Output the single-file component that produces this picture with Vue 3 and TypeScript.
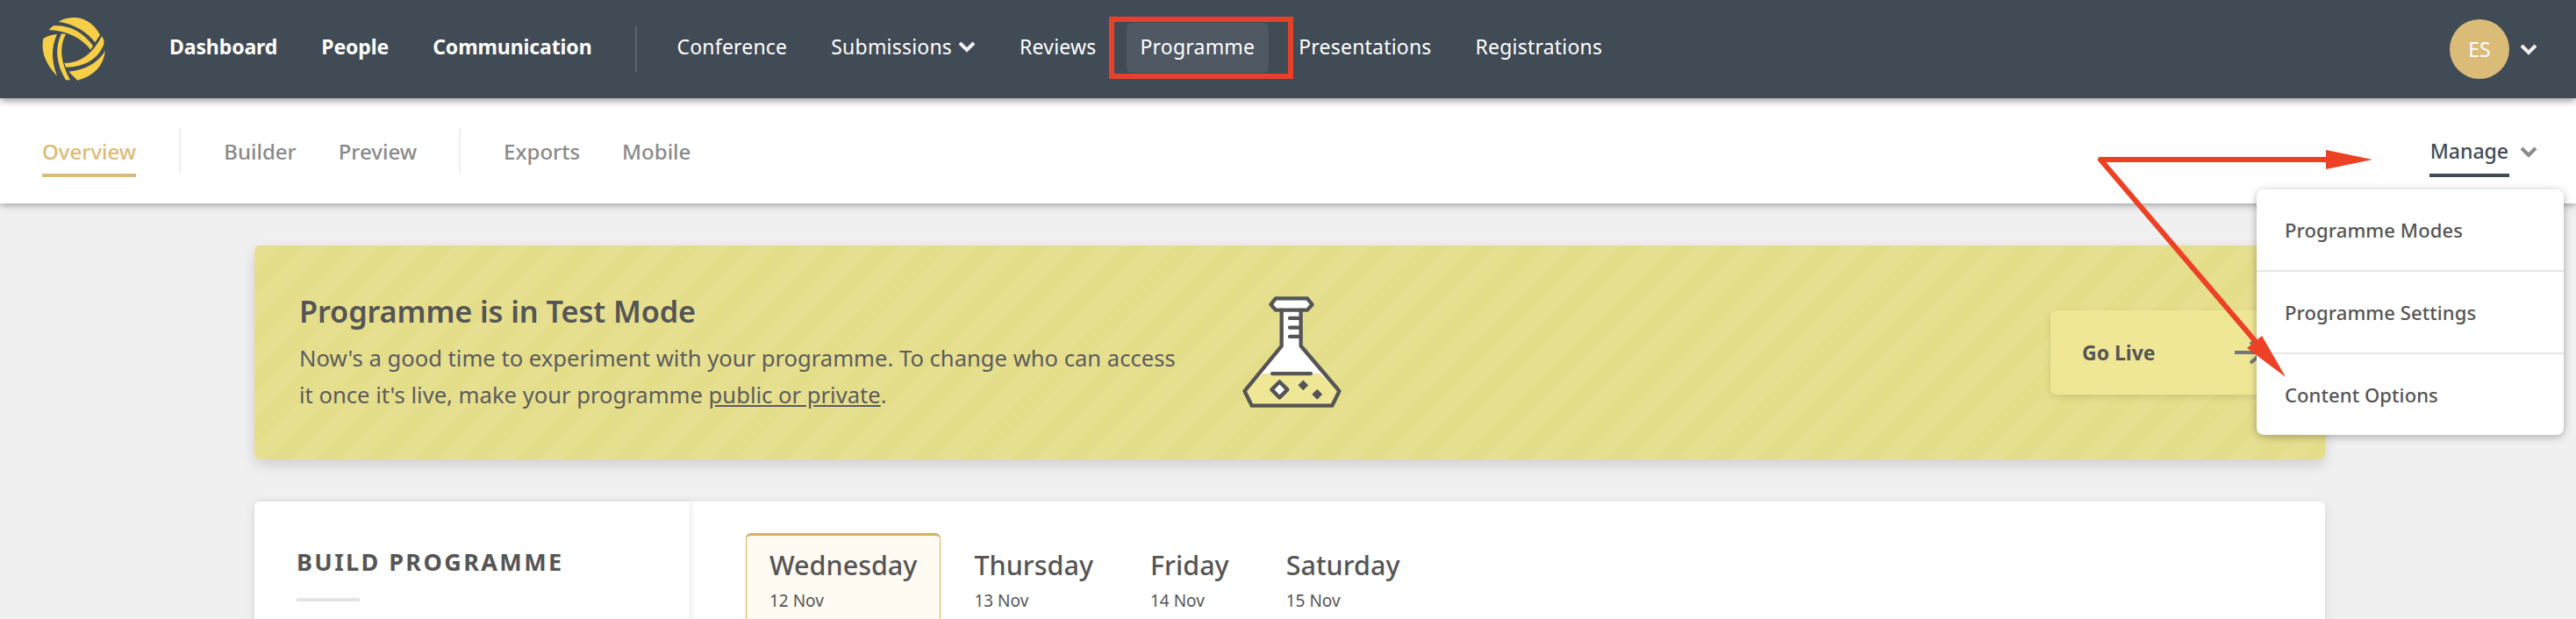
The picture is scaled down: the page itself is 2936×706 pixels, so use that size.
<script setup lang="ts">
const primary: string[] = ['Dashboard', 'People', 'Communication']
const secondary: { label: string; chevron?: boolean; active?: boolean }[] = [
  { label: 'Conference' },
  { label: 'Submissions', chevron: true },
  { label: 'Reviews' },
  { label: 'Programme', active: true },
  { label: 'Presentations' },
  { label: 'Registrations' }
]
const menu: string[] = ['Programme Modes', 'Programme Settings', 'Content Options']
const days: { name: string; date: string; active?: boolean }[] = [
  { name: 'Wednesday', date: '12 Nov', active: true },
  { name: 'Thursday', date: '13 Nov' },
  { name: 'Friday', date: '14 Nov' },
  { name: 'Saturday', date: '15 Nov' }
]
</script>

<template>
  <div class="page">
    <header class="topbar">
      <svg class="logo" viewBox="84 48 216 216" aria-hidden="true">
        <path d="M140 62 Q165 47 200 48 Q255 55 282 108 L265 133 Q220 75 140 62Z" />
        <path d="M107 90 L122 76 Q205 72 258 145 L250 158 Q200 95 107 90Z" />
        <path d="M288 112 Q298 125 295 140 Q265 215 165 218 L160 204 Q240 205 288 112Z" />
        <path d="M300 162 Q290 240 205 263 L175 233 Q260 225 300 162Z" />
        <path d="M135 105 Q105 108 88 120 Q75 185 135 248 Q105 170 135 105Z" />
        <path d="M150 103 L165 105 Q130 170 180 262 L165 262 Q115 180 150 103Z" />
      </svg>
      <nav class="nav">
        <a v-for="item in primary" :key="item" class="nav-item strong">{{ item }}</a>
        <span class="nav-sep"></span>
        <a
          v-for="item in secondary"
          :key="item.label"
          class="nav-item"
          :class="{ active: item.active }"
        >
          {{ item.label }}
          <svg v-if="item.chevron" class="chev white" viewBox="0 0 20 14"><path d="M2 3l8 8 8-8" /></svg>
        </a>
      </nav>
      <div class="user">
        <span class="avatar">ES</span>
        <svg class="chev white" viewBox="0 0 20 14"><path d="M2 3l8 8 8-8" /></svg>
      </div>
    </header>

    <div class="subbar">
      <a class="sub-item current">Overview</a>
      <span class="sub-sep"></span>
      <a class="sub-item">Builder</a>
      <a class="sub-item">Preview</a>
      <span class="sub-sep"></span>
      <a class="sub-item">Exports</a>
      <a class="sub-item">Mobile</a>
      <div class="manage">
        <a class="sub-item manage-link">Manage</a>
        <svg class="chev grey" viewBox="0 0 20 14"><path d="M2 3l8 8 8-8" /></svg>
      </div>
    </div>

    <main class="content">
      <section class="banner">
        <div class="banner-text">
          <h2>Programme is in Test Mode</h2>
          <p>
            Now's a good time to experiment with your programme. To change who can access<br />
            it once it's live, make your programme <u>public or private</u>.
          </p>
        </div>
        <svg class="flask" viewBox="345 115 342 385" aria-hidden="true">
          <path class="flask-glass" d="M482 162V285L355 440L380 490H655L680 440L548 285V162Z" />
          <path class="flask-liquid" d="M418 380H612L680 440L655 490H380L355 440Z" />
          <path class="flask-cap" d="M445 143L462 122H570L587 143L570 162H462Z" />
          <path class="flask-line" d="M482 162V285L355 440L380 490H655L680 440L548 285V162" />
          <path class="flask-line" d="M510 190H545M510 222H545M510 253H545M450 380H582" />
          <path class="flask-dia" d="M475 408L502 435L475 462L448 435Z" />
          <path class="flask-solid" d="M556 405L571 420L556 435L541 420ZM604 436L619 451L604 466L589 451Z" />
        </svg>
        <a class="golive">
          <span>Go Live</span>
          <svg class="golive-arrow" viewBox="0 0 36 30"><path d="M0 15H32M18 3l14 12-14 12" /></svg>
        </a>
      </section>

      <section class="build">
        <aside class="build-side">
          <h3>BUILD PROGRAMME</h3>
          <span class="rule"></span>
        </aside>
        <div class="build-main">
          <div v-for="day in days" :key="day.name" class="day" :class="{ selected: day.active }">
            <div class="day-name">{{ day.name }}</div>
            <div class="day-date">{{ day.date }}</div>
          </div>
        </div>
      </section>
    </main>

    <div class="dropdown">
      <a v-for="item in menu" :key="item" class="drop-item">{{ item }}</a>
    </div>

    <span class="mark-box"></span>
    <svg class="mark-arrows" viewBox="0 0 2936 706" aria-hidden="true">
      <path class="mark-line" d="M2394 182H2660M2394 182L2590 412" />
      <path class="mark-head" d="M2704 182L2651 171V193ZM2605 430L2578 383L2561 397Z" />
    </svg>
  </div>
</template>

<style>
html,
body {
  margin: 0;
  background: #f0f0f0;
  overflow: hidden;
}
</style>

<style scoped>
.page {
  position: relative;
  width: 2936px;
  height: 706px;
  overflow: hidden;
  background: #f0f0f0;
  font-family: 'Noto Sans', 'Open Sans', sans-serif;
  color: #555;
}
.topbar {
  position: relative;
  z-index: 3;
  display: flex;
  align-items: center;
  height: 112px;
  padding: 0 44px 0 48px;
  background: #414b55;
  box-shadow: 0 3px 8px rgba(0, 0, 0, 0.4);
}
.logo {
  width: 72px;
  height: 72px;
  fill: #f7cf47;
}
.nav {
  display: flex;
  align-items: center;
  gap: 18px;
  margin-left: 57px;
}
.nav-item {
  display: flex;
  align-items: center;
  gap: 7px;
  height: 57px;
  margin-top: -4px;
  padding: 0 16px 3px;
  box-sizing: border-box;
  border-radius: 6px;
  font-size: 23px;
  letter-spacing: 0.2px;
  color: #fff;
  white-space: nowrap;
}
.nav-item.strong {
  font-weight: 700;
  letter-spacing: -0.1px;
}
.nav-item.active {
  background: #4f5863;
}
.nav-sep {
  width: 2px;
  height: 52px;
  margin: 0 12px 0 15px;
  background: #5b646e;
}
.chev {
  width: 20px;
  height: 14px;
  fill: none;
  stroke-width: 4;
}
.chev.white {
  stroke: #f0f0f0;
}
.chev.grey {
  stroke: #8a8a8a;
}
.user {
  display: flex;
  align-items: center;
  gap: 12px;
  margin-left: auto;
}
.avatar {
  display: flex;
  align-items: center;
  justify-content: center;
  width: 68px;
  height: 68px;
  border-radius: 50%;
  background: #dbbb78;
  color: #fff;
  font-size: 23px;
}
.subbar {
  position: relative;
  z-index: 2;
  display: flex;
  align-items: flex-start;
  height: 120px;
  padding: 0 44px 0 48px;
  background: #fff;
  box-shadow: 0 2px 8px rgba(0, 0, 0, 0.35);
}
.sub-item {
  display: flex;
  align-items: center;
  height: 86px;
  margin-right: 48px;
  padding-top: 34px;
  font-size: 24px;
  font-weight: 500;
  color: #8a8a8a;
  box-sizing: border-box;
  white-space: nowrap;
}
.sub-item.current {
  margin-right: 49px;
  color: #dcbb77;
  height: 90px;
  border-bottom: 4px solid #dbbb78;
}
.sub-sep {
  width: 2px;
  height: 52px;
  margin: 34px 49px 0 0;
  background: #eee;
}
.manage {
  display: flex;
  align-items: flex-start;
  gap: 12px;
  margin-left: auto;
}
.manage-link {
  height: 90px;
  margin-right: 0;
  padding: 34px 1px 0;
  font-size: 23px;
  color: #414b55;
  border-bottom: 4px solid #414b55;
}
.manage .chev {
  margin-top: 54px;
}
.content {
  padding: 48px 286px 0 290px;
}
.banner {
  display: flex;
  align-items: center;
  height: 244px;
  padding: 0 47px 0 51px;
  box-sizing: border-box;
  border-radius: 6px;
  background: repeating-linear-gradient(-45deg, #e4dd8a 0 20px, #e6df8f 20px 40px);
  box-shadow: 0 6px 16px rgba(0, 0, 0, 0.14);
}
.banner-text {
  width: 1074px;
  padding-top: 2px;
}
.banner h2 {
  margin: 0 0 13px;
  font-size: 34.3px;
  line-height: 40px;
  font-weight: 600;
  letter-spacing: -0.1px;
}
.banner p {
  margin: 0;
  font-size: 25.6px;
  line-height: 42px;
  color: #5c5c5c;
}
.flask {
  width: 114px;
  height: 128px;
}
.flask-glass {
  fill: #fff;
}
.flask-liquid {
  fill: #f0e796;
}
.flask-cap {
  fill: #fff;
  stroke: #555;
  stroke-width: 13;
  stroke-linejoin: round;
}
.flask-line {
  fill: none;
  stroke: #555;
  stroke-width: 13;
  stroke-linejoin: round;
  stroke-linecap: round;
}
.flask-dia {
  fill: #fff;
  stroke: #555;
  stroke-width: 13;
  stroke-linejoin: round;
}
.flask-solid {
  fill: #555;
  stroke: #555;
  stroke-width: 4;
  stroke-linejoin: round;
}
.golive {
  display: flex;
  align-items: center;
  justify-content: space-between;
  width: 266px;
  height: 96px;
  margin-left: auto;
  padding: 0 20px 0 36px;
  box-sizing: border-box;
  border-radius: 6px;
  background: #f0e796;
  box-shadow: 0 3px 8px rgba(0, 0, 0, 0.1);
  font-size: 23px;
  font-weight: 700;
}
.golive-arrow {
  width: 36px;
  height: 30px;
  fill: none;
  stroke: #777;
  stroke-width: 4;
}
.build {
  display: flex;
  margin-top: 48px;
  height: 300px;
  border-radius: 6px;
  background: #fff;
  box-shadow: 0 4px 14px rgba(0, 0, 0, 0.1);
}
.build-side {
  width: 496px;
  padding: 48px;
  box-sizing: border-box;
  box-shadow: 2px 0 6px rgba(0, 0, 0, 0.08);
}
.build-side h3 {
  margin: 0;
  font-size: 27px;
  line-height: 42px;
  font-weight: 700;
  letter-spacing: 2.4px;
}
.rule {
  display: block;
  width: 72px;
  height: 4px;
  margin-top: 20px;
  background: #e4e4e4;
}
.build-main {
  display: flex;
  align-items: flex-start;
  gap: 11px;
  padding: 36px 0 0 64px;
}
.day {
  padding: 11px 26px;
  border: 1px solid transparent;
  border-top-width: 3px;
  border-radius: 6px;
  height: 200px;
  box-sizing: border-box;
}
.day.selected {
  border-color: #d4b064;
  background: #fffaf2;
}
.day-name {
  font-size: 30.5px;
  line-height: 44px;
  font-weight: 500;
  white-space: nowrap;
}
.day-date {
  margin-top: 5px;
  font-size: 19px;
  line-height: 28px;
}
.dropdown {
  position: absolute;
  z-index: 4;
  top: 216px;
  left: 2572px;
  width: 350px;
  border-radius: 8px;
  background: #fff;
  box-shadow: 0 2px 10px rgba(0, 0, 0, 0.3);
}
.drop-item {
  display: flex;
  align-items: center;
  height: 94px;
  box-sizing: border-box;
  padding-left: 32px;
  font-size: 22px;
  font-weight: 500;
  letter-spacing: 0.1px;
  border-bottom: 2px solid #e6e6e6;
}
.drop-item:last-child {
  height: 92px;
  border-bottom: 0;
}
.mark-box {
  position: absolute;
  z-index: 5;
  top: 19px;
  left: 1264px;
  width: 210px;
  height: 71px;
  box-sizing: border-box;
  border: 6px solid #e8412a;
}
.mark-arrows {
  position: absolute;
  z-index: 5;
  top: 0;
  left: 0;
  width: 2936px;
  height: 706px;
  pointer-events: none;
}
.mark-line {
  fill: none;
  stroke: #ec4125;
  stroke-width: 6;
  stroke-linecap: round;
  stroke-linejoin: round;
}
.mark-head {
  fill: #ec4125;
}
</style>
